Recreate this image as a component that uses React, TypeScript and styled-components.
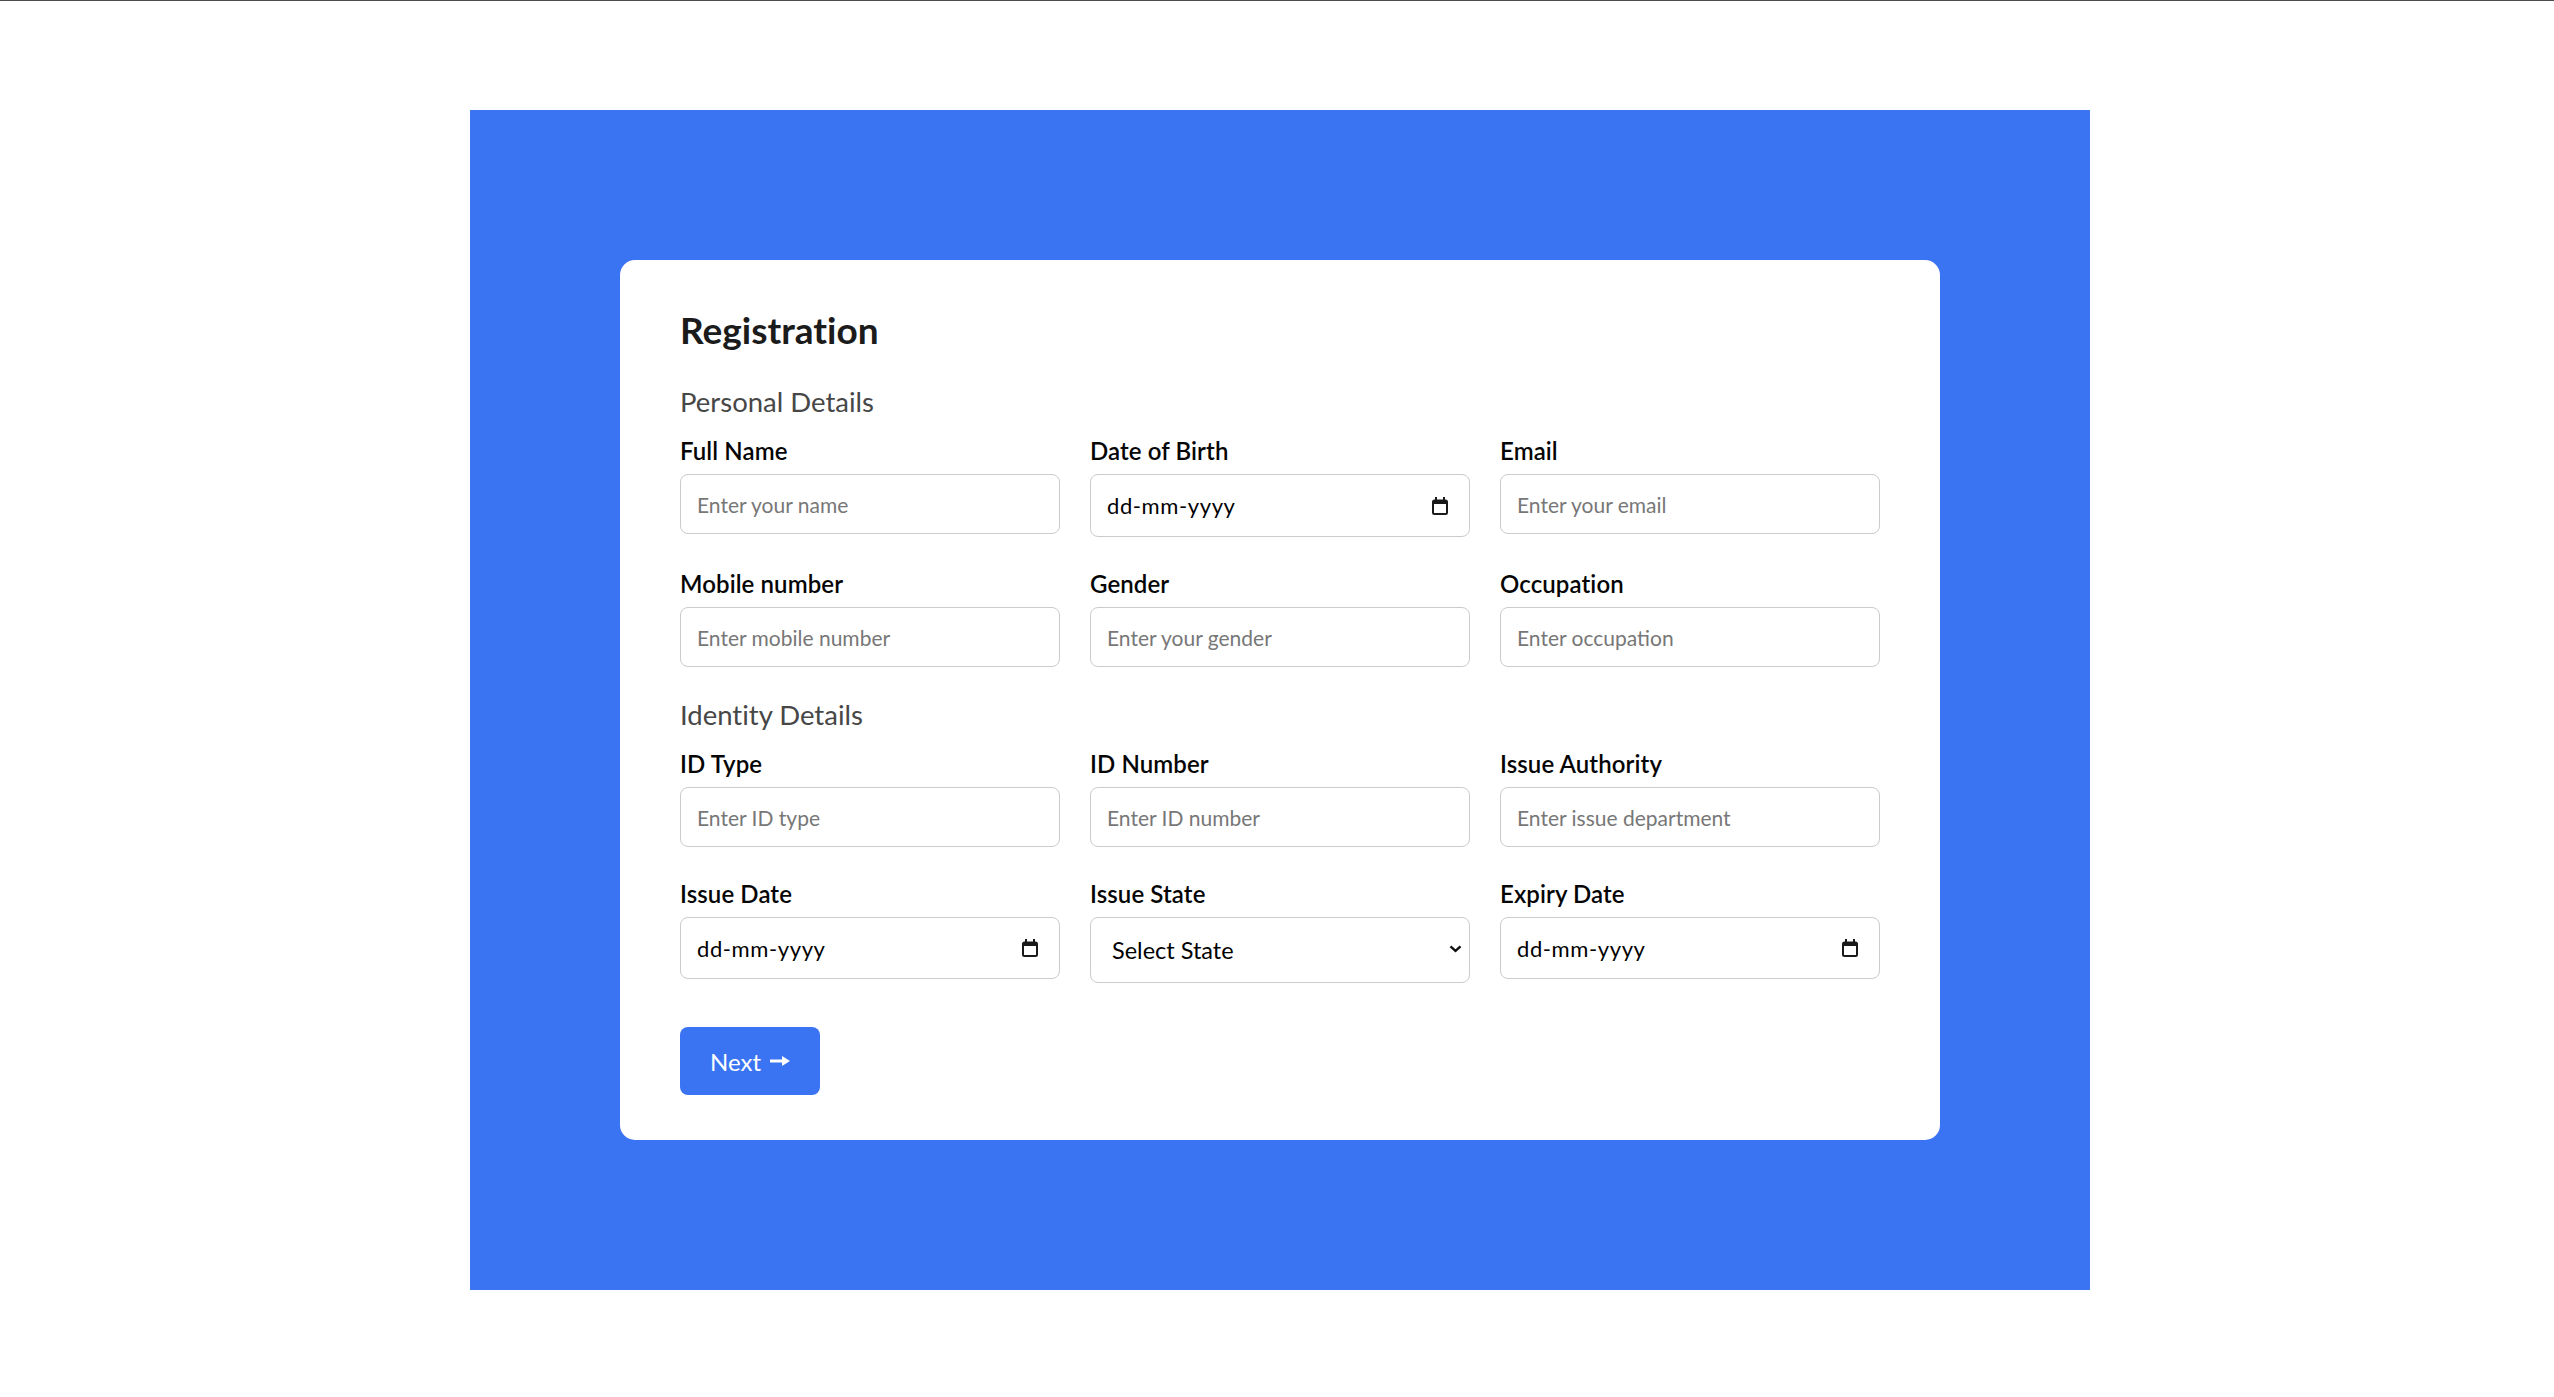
import React from "react";
import styled, { createGlobalStyle } from "styled-components";

const GlobalStyle = createGlobalStyle`
  html, body {
    margin: 0;
    padding: 0;
    background: #ffffff;
  }
  body {
    font-family: Lato, "Noto Sans", "DejaVu Sans", sans-serif;
    font-variant-ligatures: no-common-ligatures;
    color: #111;
  }
  * { box-sizing: border-box; }
`;

const Page = styled.div`
  min-height: 1397px;
  border-top: 1px solid #4a4a4a;
  padding: 109px 0 0 470px;
`;

const Backdrop = styled.section`
  width: 1620px;
  padding: 150px;
  background: #3b74f2;
`;

const Card = styled.form`
  background: #ffffff;
  border-radius: 15px;
  padding: 48px 60px 45px;
  display: flex;
  flex-direction: column;
  align-items: flex-start;
`;

const Title = styled.h1`
  margin: 0;
  font-size: 37px;
  line-height: 44px;
  font-weight: 700;
  color: #1b1b1b;
  font-variant-ligatures: none;
`;

const SectionTitle = styled.h2<{ $gap: number }>`
  margin: ${(p) => p.$gap}px 0 17px;
  font-size: 27.5px;
  line-height: 34px;
  font-weight: 400;
  color: #474747;
  font-variant-ligatures: none;
`;

const Grid = styled.div`
  width: 100%;
  display: grid;
  grid-template-columns: repeat(3, 380px);
  column-gap: 30px;
  row-gap: 32px;
  align-items: start;
`;

const Field = styled.div`
  display: flex;
  flex-direction: column;
  gap: 8px;
`;

const Label = styled.label`
  font-size: 24px;
  line-height: 30px;
  font-weight: 600;
  color: #050505;
  letter-spacing: 0.1px;
`;

const TextInput = styled.input`
  height: 60px;
  width: 100%;
  border: 1px solid #cbcbcb;
  border-radius: 8px;
  padding: 0 16px;
  font-family: inherit;
  font-size: 21px;
  color: #111;
  background: #fff;
  outline: none;
  &::placeholder {
    color: #777777;
  }
`;

const DateBox = styled.label<{ $tall?: boolean }>`
  height: ${(p) => (p.$tall ? 63 : 62)}px;
  display: flex;
  align-items: center;
  border: 1px solid #cbcbcb;
  border-radius: 8px;
  padding: 0 21px 0 16px;
  background: #fff;
`;

const DateInput = styled.input`
  flex: 1;
  min-width: 0;
  border: none;
  outline: none;
  padding: 0;
  font-family: inherit;
  font-size: 22px;
  letter-spacing: 0.6px;
  color: #000;
  background: transparent;
  &::placeholder {
    color: #000;
  }
`;

const SelectBox = styled.div`
  position: relative;
  height: 66px;
  display: flex;
  align-items: center;
  border: 1px solid #cbcbcb;
  border-radius: 8px;
  background: #fff;
`;

const Select = styled.select`
  appearance: none;
  -webkit-appearance: none;
  width: 100%;
  height: 100%;
  border: none;
  outline: none;
  background: transparent;
  padding: 0 40px 0 21px;
  font-family: inherit;
  font-size: 23.5px;
  color: #000;
`;

const Chevron = styled.svg`
  position: absolute;
  right: 7px;
  top: 50%;
  transform: translateY(-65%);
  pointer-events: none;
`;

const NextButton = styled.button`
  margin-top: 44px;
  height: 68px;
  padding: 0 30px 0 30px;
  display: inline-flex;
  align-items: center;
  gap: 9px;
  border: none;
  border-radius: 8px;
  background: #3b74f2;
  color: #ffffff;
  font-family: inherit;
  font-size: 24px;
  font-weight: 400;
  cursor: pointer;
`;

const CalendarIcon = () => (
  <svg width="16" height="18" viewBox="0 0 16 18" aria-hidden="true">
    <rect x="1" y="3.5" width="14" height="13.5" rx="1.5" fill="none" stroke="#1a1a1a" strokeWidth="2" />
    <rect x="1" y="3" width="14" height="4" fill="#1a1a1a" />
    <rect x="3" y="0" width="2" height="4" fill="#1a1a1a" />
    <rect x="11" y="0" width="2" height="4" fill="#1a1a1a" />
  </svg>
);

const ArrowIcon = () => (
  <svg width="20" height="12" viewBox="0 0 20 12" aria-hidden="true">
    <line x1="0" y1="6" x2="13" y2="6" stroke="#fff" strokeWidth="3" />
    <polygon points="12,1 20,6 12,11" fill="#fff" />
  </svg>
);

type TextFieldProps = { id: string; label: string; placeholder: string };

const TextField = ({ id, label, placeholder }: TextFieldProps) => (
  <Field>
    <Label htmlFor={id}>{label}</Label>
    <TextInput id={id} type="text" placeholder={placeholder} />
  </Field>
);

const DateField = ({ id, label, tall }: { id: string; label: string; tall?: boolean }) => (
  <Field>
    <Label htmlFor={id}>{label}</Label>
    <DateBox $tall={tall}>
      <DateInput id={id} type="text" placeholder="dd-mm-yyyy" />
      <CalendarIcon />
    </DateBox>
  </Field>
);

export default function App() {
  return (
    <>
      <GlobalStyle />
      <Page>
        <Backdrop>
          <Card onSubmit={(e) => e.preventDefault()}>
            <Title>Registration</Title>
            <SectionTitle $gap={33}>Personal Details</SectionTitle>
            <Grid>
              <TextField id="name" label="Full Name" placeholder="Enter your name" />
              <DateField id="dob" label="Date of Birth" tall />
              <TextField id="email" label="Email" placeholder="Enter your email" />
              <TextField id="mobile" label="Mobile number" placeholder="Enter mobile number" />
              <TextField id="gender" label="Gender" placeholder="Enter your gender" />
              <TextField id="occupation" label="Occupation" placeholder="Enter occupation" />
            </Grid>
            <SectionTitle $gap={31}>Identity Details</SectionTitle>
            <Grid>
              <TextField id="idtype" label="ID Type" placeholder="Enter ID type" />
              <TextField id="idnumber" label="ID Number" placeholder="Enter ID number" />
              <TextField id="authority" label="Issue Authority" placeholder="Enter issue department" />
              <DateField id="issuedate" label="Issue Date" />
              <Field>
                <Label htmlFor="state">Issue State</Label>
                <SelectBox>
                  <Select id="state" defaultValue="">
                    <option value="">Select State</option>
                  </Select>
                  <Chevron width="13" height="8" viewBox="0 0 13 8" aria-hidden="true">
                    <polyline points="1.5,1.5 6.5,6 11.5,1.5" fill="none" stroke="#111" strokeWidth="2.4" />
                  </Chevron>
                </SelectBox>
              </Field>
              <DateField id="expiry" label="Expiry Date" />
            </Grid>
            <NextButton type="submit">
              Next
              <ArrowIcon />
            </NextButton>
          </Card>
        </Backdrop>
      </Page>
    </>
  );
}
